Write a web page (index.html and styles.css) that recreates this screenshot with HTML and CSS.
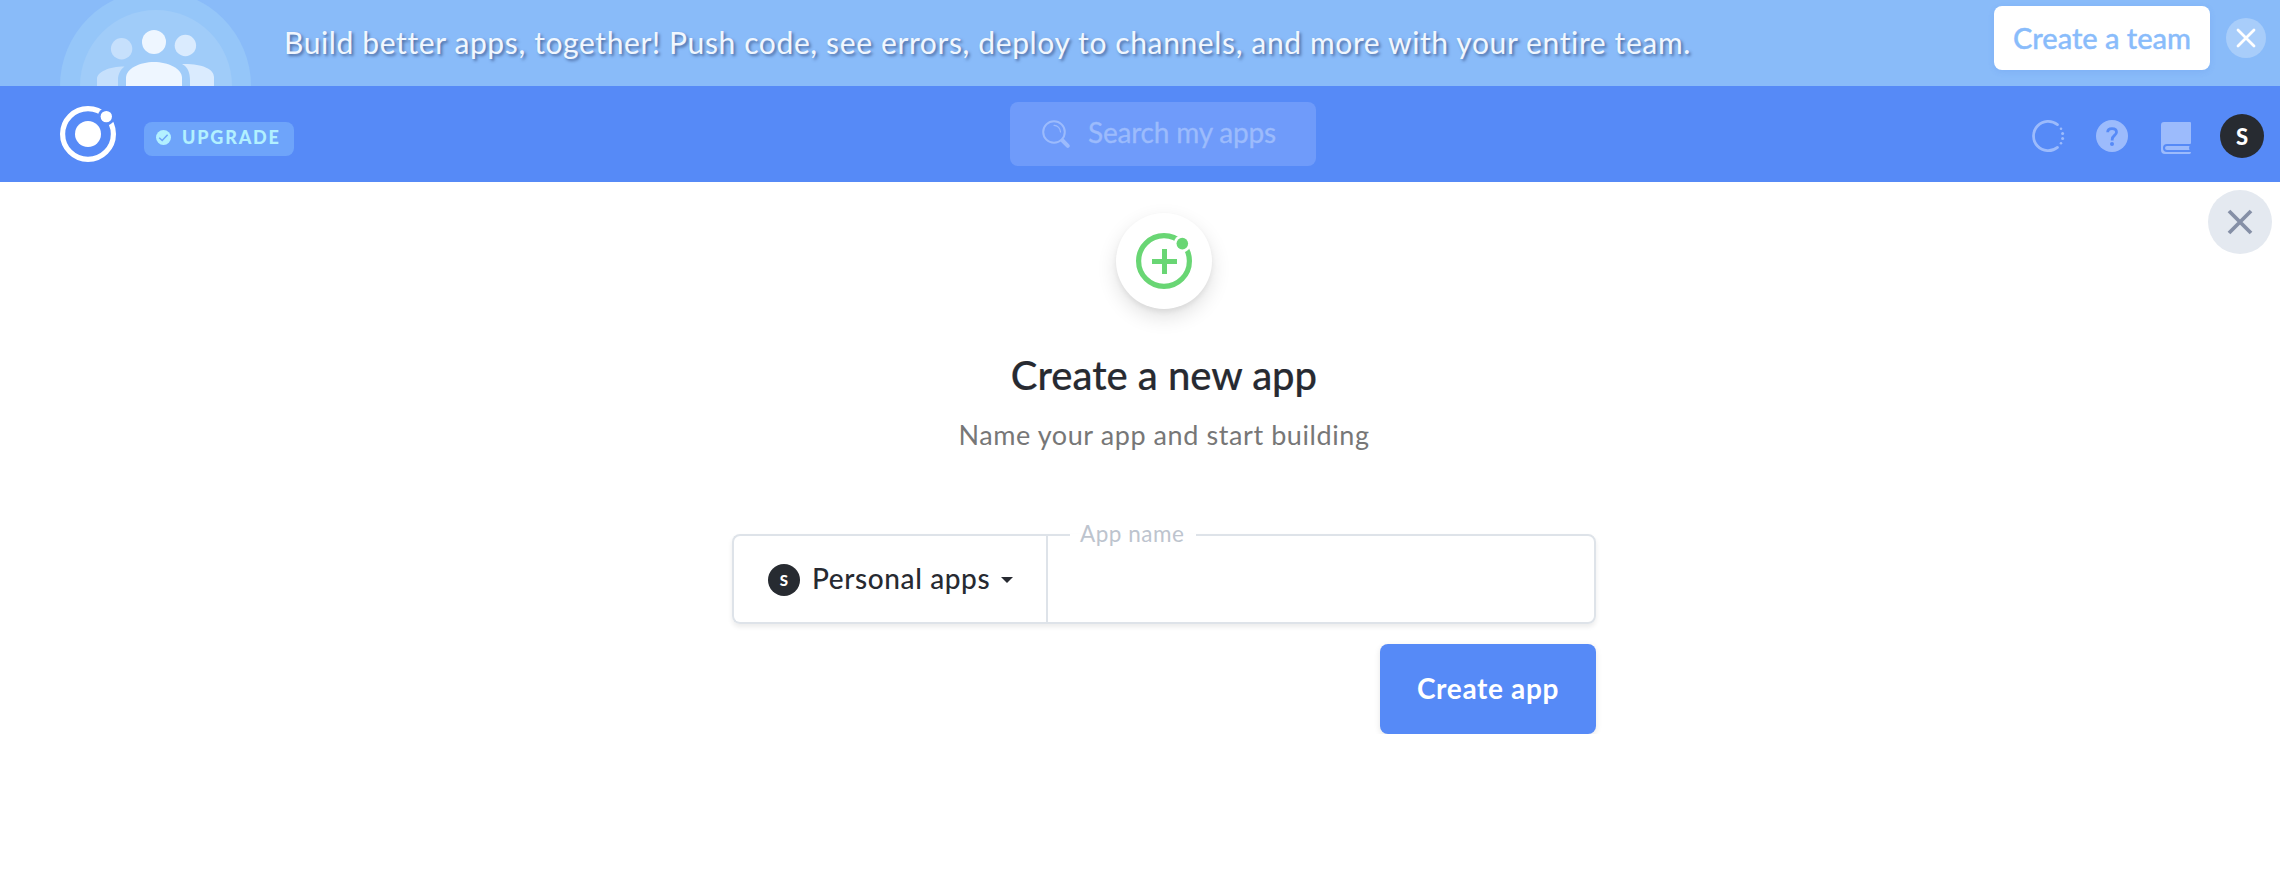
FILE: index.html
```html
<!DOCTYPE html>
<html lang="en"><head><meta charset="utf-8"><title>Create a new app</title><link rel="stylesheet" href="styles.css"></head>
<body>
<section class="banner">
  <svg class="team-art" width="192" height="86" viewBox="60 0 192 86">
    <circle cx="155.5" cy="86" r="95.5" fill="#95c6f9"/><circle cx="156" cy="86" r="76" fill="#a0ccf9"/>
    <g fill="#c6e0fc"><circle cx="121.6" cy="48.7" r="10.7"/><path d="M97 86V79C97 72 109 66.500 124.500 66.500C120.500 69.500 118 74 118 80V86Z"/></g>
    <g fill="#daebfe"><circle cx="185.400" cy="45.500" r="10.700"/><path d="M214 86V77C214 69 202 63.500 182 64C188 67 190 73 190 80V86Z"/></g>
    <g fill="#eef6ff"><circle cx="154" cy="42" r="12"/><path d="M126 86V78C126 68.500 140 62 154 62S182 68.500 182 78V86Z"/></g>
  </svg>
  <p class="banner-text">Build better apps, together! Push code, see errors, deploy to channels, and more with your entire team.</p>
  <button class="team-btn">Create a team</button>
  <button class="dismiss" aria-label="Dismiss"><svg width="40" height="40" viewBox="0 0 40 40"><path d="M12 12 28 28M28 12 12 28" fill="none" stroke="#fff" stroke-width="2.800" stroke-linecap="round"/></svg></button>
</section>
<header class="header">
  <div class="brand">
    <svg width="56" height="56" viewBox="0 0 56 56"><mask id="gap"><path d="M0 0H56V56H0Z" fill="#fff"/><circle cx="46.300" cy="10.600" r="8.600" fill="#000"/></mask>
      <circle cx="28" cy="28" r="25.400" fill="none" stroke="#fff" stroke-width="5.200" mask="url(#gap)"/><circle cx="28" cy="28" r="13" fill="#fff"/><circle cx="46.300" cy="10.600" r="5.700" fill="#fff"/></svg>
    <a class="upgrade"><svg width="15" height="15" viewBox="0 0 15 15"><circle cx="7.500" cy="7.500" r="7.500" fill="#b2f0ff"/><path d="M3.200 7.700 6.200 10.500 11.600 4.700" fill="none" stroke="#6ea4fa" stroke-width="1.500"/></svg><span class="upgrade-label">UPGRADE</span></a>
  </div>
  <div class="search"><svg width="29" height="29" viewBox="0 0 29 29" fill="none" stroke="#9cbbfc" stroke-linecap="round"><circle cx="12" cy="12" r="10.800" stroke-width="2"/><path d="M12 5.300A6.800 6.800 0 0 1 18.500 12" stroke-width="1.200"/><path d="M20.500 20.500 25.800 25.800" stroke-width="4"/></svg><span class="search-label">Search my apps</span></div>
  <nav class="tools">
    <svg width="32" height="32" viewBox="0 0 32 32"><path d="M25.500 4.600A14.700 14.700 0 1 0 25.500 27.400" fill="none" stroke="#9cbbfc" stroke-width="2.800" stroke-linecap="round"/><g fill="#9cbbfc"><circle cx="29" cy="8.700" r="1.300"/><circle cx="30.600" cy="13.500" r="1.500"/><circle cx="30.600" cy="18.600" r="1.500"/><circle cx="29" cy="23.300" r="1.300"/></g></svg>
    <svg width="32" height="32" viewBox="0 0 32 32"><circle cx="16" cy="16" r="16" fill="#9cbbfc"/><path d="M11.700 12.300C11.700 9.900 13.500 8.700 16 8.700C18.600 8.700 20.500 10 20.500 12.300C20.500 15.200 16.200 15.700 16.200 19.200V20.500" fill="none" stroke="#568af7" stroke-width="2.800"/><circle cx="16" cy="24" r="2" fill="#568af7"/></svg>
    <svg width="32" height="32" viewBox="0 0 32 32" fill="#9cbbfc"><path d="M4 2H30Q31 2 31 3V23Q31 24 30 24H7A4 4 0 0 0 7 32H31Q31 34 29.500 34H5A4 4 0 0 1 1 30V5Q1 2 4 2Z"/><path d="M7 26H29.500Q28.500 28 29.500 30H7A2 2 0 0 1 7 26Z"/></svg>
    <div class="avatar">S</div>
  </nav>
</header>
<main class="main">
  <button class="close" aria-label="Close"><svg width="64" height="64" viewBox="0 0 64 64"><path d="M21 21 43 43M43 21 21 43" fill="none" stroke="#858fa6" stroke-width="3.800"/></svg></button>
  <div class="badge"><svg width="56" height="56" viewBox="0 0 56 56"><circle cx="28" cy="28" r="25.400" fill="none" stroke="#69d674" stroke-width="5.200" mask="url(#gap)"/><path d="M16 28.500H41M28.500 16V41" stroke="#69d674" stroke-width="5"/><circle cx="46.300" cy="10.600" r="5.800" fill="#69d674"/></svg></div>
  <h1 class="title">Create a new app</h1>
  <p class="subtitle">Name your app and start building</p>
  <form class="form">
    <div class="fields">
      <div class="owner"><div class="avatar small">S</div><span class="owner-name">Personal apps</span><svg width="12" height="6" viewBox="0 0 12 6"><path d="M0 0H12L6 6Z" fill="#272a31"/></svg></div>
      <fieldset class="name-field"><legend class="legend">App name</legend></fieldset>
    </div>
    <button class="create" type="button">Create app</button>
  </form>
</main>
</body></html>
```
FILE: styles.css
```css
* { box-sizing: border-box; }
body { margin: 0; background: #fff; color: #272a31; font-family: Lato, sans-serif; white-space: nowrap; }
button { border: 0; padding: 0; font-family: inherit; }
p, h1 { margin: 0; }
svg { display: block; flex: none; overflow: visible; }
.banner { height: 86px; display: flex; align-items: flex-start; padding: 0 14px 0 60px; background: #89bbf9; overflow: hidden; }
.team-art { overflow: hidden; }
.banner-text { flex: 1; padding: 18px 0 0 32px; font-size: 30px; line-height: 48px; letter-spacing: .62px; color: #f1f7fe; text-shadow: 2px 2px 3px rgba(40, 60, 110, .6); }
.team-btn { width: 216px; height: 64px; margin: 6px 16px 0 0; padding-bottom: 2px; border-radius: 8px; background: #fff; color: #89bcfb; -webkit-text-stroke: .4px #89bcfb; font-size: 29px; font-weight: 500; box-shadow: 0 2px 6px rgba(60, 110, 220, .12); }
.dismiss { width: 40px; height: 40px; margin-top: 18px; border-radius: 50%; background: #a8cdfa; }
.header { height: 96px; display: grid; grid-template-columns: 950px 306px 1fr; padding: 0 16px 0 60px; background: #568af7; }
.brand { display: flex; gap: 28px; padding-top: 20px; }
.upgrade { width: 150px; height: 34px; margin-top: 16px; padding: 0 0 3px 12px; display: flex; align-items: center; gap: 11px; border-radius: 8px; background: #6ea4fa; color: #b2f0ff; font-size: 18px; font-weight: 900; letter-spacing: 1.8px; }
.upgrade-label { padding-bottom: 1px; }
.search { height: 64px; margin-top: 16px; padding-left: 32px; display: flex; align-items: center; gap: 17px; border-radius: 8px; background: #6f9bfa; color: #9cbbfc; font-size: 28px; }
.search-label { padding-bottom: 5px; letter-spacing: -.2px; -webkit-text-stroke: .3px #9cbbfc; }
.tools { display: flex; justify-content: flex-end; align-items: center; gap: 32px; padding-top: 4px; }
.avatar { width: 44px; height: 44px; margin-left: -4px; display: flex; align-items: center; justify-content: center; border-radius: 50%; background: #272b31; color: #fff; font-size: 22px; font-weight: 900; }
.main { position: relative; display: flex; flex-direction: column; align-items: center; padding: 31px 0 0 48px; }
.close { position: absolute; top: 8px; right: 8px; width: 64px; height: 64px; border-radius: 50%; background: #e4e9f0; }
.badge { width: 96px; height: 96px; padding: 20px; border-radius: 50%; background: #fff; box-shadow: 0 8px 20px rgba(0, 0, 0, .12), 0 3px 5px rgba(0, 0, 0, .06); }
.title { margin-top: 42px; font-size: 40px; line-height: 48px; font-weight: 500; -webkit-text-stroke: .2px #272a31; }
.subtitle { margin-top: 18px; font-size: 27px; line-height: 36px; letter-spacing: .58px; color: #777; }
.form { width: 864px; display: flex; flex-direction: column; align-items: flex-end; }
.fields { width: 864px; height: 90px; margin-top: 81px; display: flex; border-radius: 8px; box-shadow: 0 3px 5px rgba(0, 0, 0, .08); }
.owner { width: 316px; height: 90px; padding: 2px 0 0 34px; display: flex; align-items: center; border: 2px solid #dee3e9; border-right: 0; border-radius: 8px 0 0 8px; font-size: 28px; font-weight: 500; }
.small { width: 32px; height: 32px; margin: 0 12px 0 0; font-size: 15px; }
.owner-name { width: 189px; padding-bottom: 5px; letter-spacing: .6px; }
.name-field { flex: 1; height: 101px; margin: -11px 0 0 -2px; padding: 0 0 0 22px; border: 2px solid #dee3e9; border-radius: 0 8px 8px 0; }
.legend { width: 126px; height: 24px; padding: 0 0 0 10px; font-size: 22.5px; line-height: 22px; letter-spacing: .5px; color: #bdc4ce; }
.create { width: 216px; height: 90px; margin-top: 20px; padding-bottom: 3px; border-radius: 8px; background: #568af7; color: #fff; font-size: 28px; font-weight: 700; letter-spacing: .65px; box-shadow: 0 2px 6px rgba(0, 0, 0, .1); }
```
